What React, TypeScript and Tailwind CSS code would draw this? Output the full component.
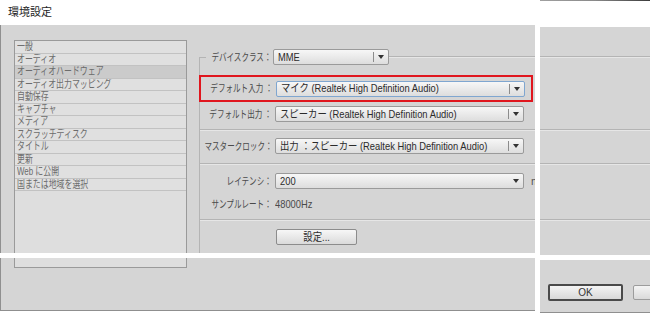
import React from "react";

const sections = [
  "一般",
  "オーディオ",
  "オーディオハードウェア",
  "オーディオ出力マッピング",
  "自動保存",
  "キャプチャ",
  "メディア",
  "スクラッチディスク",
  "タイトル",
  "更新",
  "Web に公開",
  "国または地域を選択",
];

function Label({ text, width = "w-[72px]" }: { text: string; width?: string }) {
  return (
    <div className={`flex shrink-0 justify-end ${width}`}>
      <span className="shrink-0 origin-right scale-x-[0.72] whitespace-nowrap text-[10.5px] leading-none text-[#4a4a4a]">
        {text}
      </span>
    </div>
  );
}

function Select({
  value,
  width,
  focus = false,
  divider = true,
  gap = "ml-[3px]",
}: {
  value: string;
  width: string;
  focus?: boolean;
  divider?: boolean;
  gap?: string;
}) {
  return (
    <div
      className={`flex h-[16px] shrink-0 items-center rounded-[2px] border bg-gradient-to-b from-[#f7f7f7] to-[#dddddd] ${gap} ${width} ${
        focus ? "border-[#7fa6d0]" : "border-[#9a9a9a]"
      }`}
    >
      <div className="min-w-0 flex-1 overflow-hidden pl-[4px]">
        <span className="block origin-left scale-x-[0.85] whitespace-nowrap text-[11px] leading-none text-[#2b2b2b]">
          {value}
        </span>
      </div>
      {divider && <div className="h-[10px] w-px bg-[#8c8c8c]" />}
      <div className="ml-[4px] mr-[4px] h-0 w-0 border-x-[3px] border-t-[4px] border-x-transparent border-t-[#333333]" />
    </div>
  );
}

function Rule() {
  return (
    <div>
      <div className="h-px bg-[#b4b4b4]" />
      <div className="h-px bg-[#e6e6e6]" />
    </div>
  );
}

export default function App() {
  return (
    <div className="flex h-[317px] w-[650px] overflow-hidden bg-white font-['Liberation_Sans','Noto_Sans_CJK_JP',sans-serif]">
      {/* left half of the dialog */}
      <div className="flex w-[535px] shrink-0 flex-col">
        <div className="flex h-[25px] items-center pl-[8px]">
          <span className="text-[11px] leading-none text-[#1e1e1e]">環境設定</span>
        </div>

        <div className="flex h-[228px] border-l border-[#8f8f8f] bg-[#d5d5d5]">
          <div className="ml-[13px] mt-[15px] h-[213px] w-[173px] shrink-0 border-x border-t border-[#9a9a9a] bg-[#dedede]">
            {sections.map((s, i) => (
              <div
                key={s}
                className={`flex h-[12.5px] items-center overflow-hidden border-b border-[#c2c2c2] pl-[2px] ${
                  i === 2 ? "bg-[#cbcbcb]" : "bg-[#e0e0e0]"
                }`}
              >
                <span className="origin-left scale-x-[0.72] whitespace-nowrap text-[11px] leading-none text-[#6c6c6c]">
                  {s}
                </span>
              </div>
            ))}
          </div>

          <div className="ml-[12px] mt-[24px] flex h-[204px] w-[336px] shrink-0 flex-col overflow-hidden">
            <div className="flex h-[16px] shrink-0 items-center">
              <div className="h-[8px] w-[7px] self-end border-l border-t border-[#b4b4b4]" />
              <Label text="デバイスクラス：" width="w-[65px]" />
              <Select value="MME" width="w-[116px]" gap="ml-[2px]" />
              <div className="h-[2px] flex-1 border-t border-[#b4b4b4] bg-[#e6e6e6]" />
            </div>

            <div className="flex flex-1 flex-col border-l border-[#b4b4b4]">
              <div className="-ml-px mt-[10px] flex h-[27px] w-[334px] items-center border-2 border-[#e0161e]">
                <Label text="デフォルト入力 ：" />
                <Select value="マイク (Realtek High Definition Audio)" width="w-[249px]" focus />
              </div>

              <div className="mt-[4px] flex h-[16px] items-center">
                <Label text="デフォルト出力 ：" />
                <Select value="スピーカー (Realtek High Definition Audio)" width="w-[249px]" />
              </div>

              <div className="mt-[7px]">
                <Rule />
              </div>

              <div className="mt-[7px] flex h-[16px] items-center">
                <Label text="マスタークロック：" />
                <Select value="出力 ：スピーカー (Realtek High Definition Audio)" width="w-[249px]" />
              </div>

              <div className="mt-[9px]">
                <Rule />
              </div>

              <div className="mt-[8px] flex h-[16px] items-center">
                <Label text="レイテンシ：" />
                <Select value="200" width="w-[249px]" divider={false} />
                <span className="ml-[7px] whitespace-nowrap text-[11px] leading-none text-[#555555]">ms</span>
              </div>

              <div className="mt-[8px] flex h-[14px] items-center">
                <Label text="サンプルレート：" />
                <span className="ml-[3px] origin-left scale-x-[0.85] whitespace-nowrap text-[11px] leading-none text-[#4a4a4a]">
                  48000Hz
                </span>
              </div>

              <div className="mt-[8px]">
                <Rule />
              </div>

              <div className="mt-[8px] flex">
                <button className="ml-[76px] flex h-[16px] w-[81px] items-center justify-center rounded-[2px] border border-[#8c8c8c] bg-gradient-to-b from-[#f7f7f7] to-[#dadada]">
                  <span className="scale-x-[0.85] text-[11px] leading-none text-[#2b2b2b]">設定...</span>
                </button>
              </div>
            </div>
          </div>
        </div>

        <div className="h-[5px]" />

        <div className="h-[53px] border-b border-l border-[#8f8f8f] bg-[#d5d5d5]">
          <div className="ml-[13px] h-[10px] w-[173px] border-x border-b border-[#9a9a9a] bg-[#dedede]" />
        </div>
      </div>

      <div className="w-[5px] shrink-0" />

      {/* right half of the dialog */}
      <div className="flex w-[110px] shrink-0 flex-col">
        <div className="h-px bg-gradient-to-r from-[#a0a0a0] via-[#8a8a8a] to-[#3c3c3c]" />
        <div className="h-[26px]" />
        <div className="flex h-[228px] flex-col bg-[#d5d5d5]">
          <div className="mt-[29px]">
            <Rule />
          </div>
          <div className="mt-[71px]">
            <Rule />
          </div>
          <div className="mt-[32px]">
            <Rule />
          </div>
          <div className="mt-[54px]">
            <Rule />
          </div>
        </div>
        <div className="h-[5px]" />
        <div className="flex h-[53px] items-start gap-[10px] border-b border-[#8f8f8f] bg-[#d5d5d5] pl-[8px] pt-[24px]">
          <button className="flex h-[17px] w-[75px] shrink-0 items-center justify-center rounded-[2px] border-2 border-[#4a4a4a] bg-gradient-to-b from-[#f4f4f4] to-[#d9d9d9]">
            <span className="text-[10px] leading-none text-[#333333]">OK</span>
          </button>
          <button className="mt-px flex h-[15px] w-[75px] shrink-0 items-center justify-center rounded-[2px] border border-[#9c9c9c] bg-gradient-to-b from-[#f4f4f4] to-[#dadada]">
            <span className="whitespace-nowrap pl-[34px] text-[10px] leading-none text-[#333333]">キャンセル</span>
          </button>
        </div>
      </div>
    </div>
  );
}
